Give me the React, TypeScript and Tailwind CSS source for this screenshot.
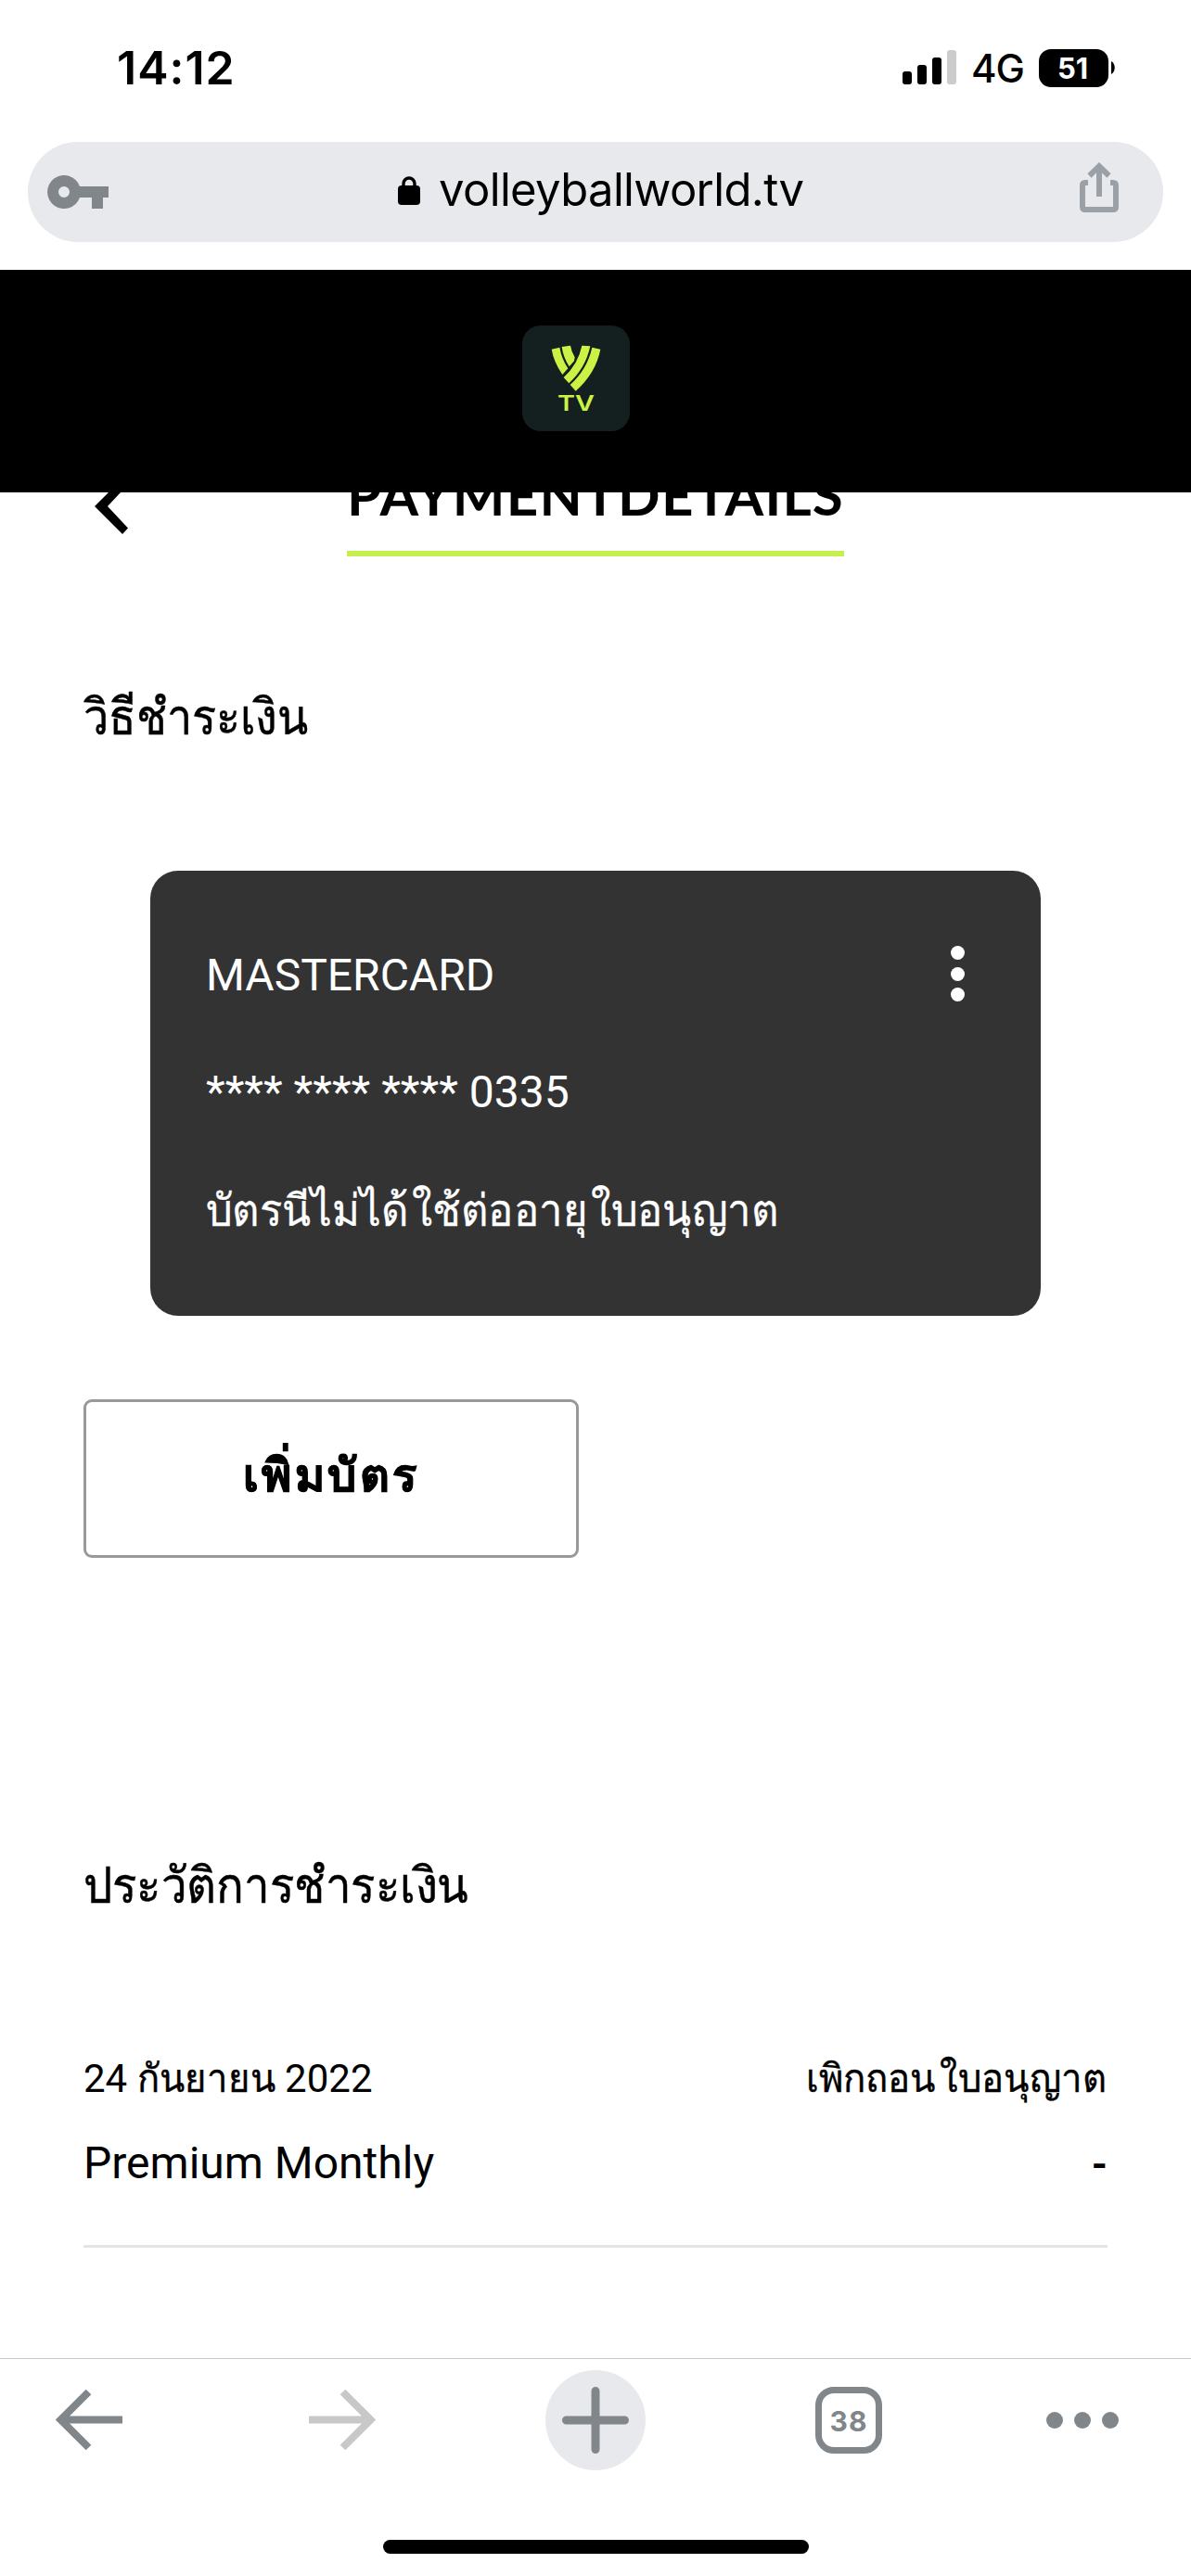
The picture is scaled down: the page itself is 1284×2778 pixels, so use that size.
import React from "react";

function StatusBar() {
  return (
    <div className="flex h-[153px] items-start justify-between pt-[44px] pl-[126px] pr-[82px]">
      <span className="font-[Inter] text-[50px] leading-[58px] font-semibold tracking-[1px]">14:12</span>
      <div className="flex h-[58px] items-center">
        <div className="mt-[-1px] flex h-[37px] items-end gap-[6px]">
          <i className="h-[14px] w-[10px] rounded-[3px] bg-black" />
          <i className="h-[21px] w-[10px] rounded-[3px] bg-black" />
          <i className="h-[29px] w-[10px] rounded-[3px] bg-black" />
          <i className="h-[37px] w-[10px] rounded-[3px] bg-[#cccccc]" />
        </div>
        <span className="ml-[16px] w-[73px] pt-[2px] font-[Inter] text-[42px] leading-[50px] font-medium tracking-[-1px]">4G</span>
        <div className="flex h-[41px] w-[75px] items-center justify-center rounded-[13px] bg-black pr-[2px] font-[Inter] text-[31px] font-bold leading-none text-white">
          51
        </div>
        <svg className="ml-[3px]" width="4" height="14" viewBox="0 0 4 14">
          <path d="M0 0C5 3 5 11 0 14Z" />
        </svg>
      </div>
    </div>
  );
}

function AddressBar() {
  return (
    <div className="mx-[30px] flex h-[108px] items-center justify-between rounded-full bg-[#e8e9ed] pl-[21px] pr-[48px]">
      <svg width="66" height="36" viewBox="0 0 66 36" fill="#80868a">
        <path
          fillRule="evenodd"
          d="M35 12A18 18 0 1 0 35 24H48V36H60V24H66V12ZM18 12A6 6 0 1 1 18 24A6 6 0 1 1 18 12Z"
        />
      </svg>
      <div className="ml-[13px] flex items-center">
        <svg className="mt-[-3px]" width="24" height="31" viewBox="0 0 24 31">
          <rect y="10" width="24" height="21" rx="4" />
          <path d="M6 12V8a6 6 0 0 1 12 0v4" fill="none" stroke="#000" strokeWidth="3.4" />
        </svg>
        <span className="ml-[20px] mt-[-4px] w-[392px] font-[Inter] text-[49px] leading-[60px] tracking-[-0.650px] whitespace-nowrap">
          volleyballworld.tv
        </span>
      </div>
      <svg className="mt-[-10px]" width="42" height="54" viewBox="0 0 42 54" fill="none" stroke="#9aa0a6" strokeWidth="6">
        <path d="M9 22H6Q3 22 3 25V48Q3 51 6 51H36Q39 51 39 48V25Q39 22 36 22H33" />
        <path d="M21 37V5M10.500 14.500L21 4.200L31.500 14.500" />
      </svg>
    </div>
  );
}

function Brand() {
  return (
    <header className="mt-[30px] flex h-[240px] justify-center bg-black pt-[60px] pr-[42px]">
      <div className="flex h-[114px] w-[116px] flex-col items-center rounded-[20px] bg-[#14201f] pt-[21px]">
        <svg width="54" height="50" viewBox="163 128 160 150" fill="#cdf246">
          <path d="M164 142L190 136Q196 172 217 204L199 224Q171 183 164 142Z" />
          <path d="M197 134L225 130Q228 150 239 168L237 180L221 198Q202 169 197 134Z" />
          <path d="M262 130L289 132Q274 203 220 252L203 233Q250 190 262 130Z" />
          <path d="M295 136L322 142Q307 219 242 277L224 257Q279 207 295 136Z" />
        </svg>
        <span className="mt-[2px] scale-x-[1.25] font-[Inter] text-[23px] leading-[22px] font-semibold text-[#cdf246]">TV</span>
      </div>
    </header>
  );
}

function PageTitle() {
  return (
    <div className="h-[69px] overflow-hidden">
      <div className="mt-[-31px] flex h-[100px] items-start pl-[102px]">
        <svg className="mt-[16px]" width="36" height="60" viewBox="0 0 36 60">
          <path d="M30 0L36 6.500L14 30L36 53.500L30 60L0 30Z" />
        </svg>
        <h1 className="ml-[236px] h-[100px] w-[536px] border-b-[6px] border-[#c6ee4c] text-center font-[Lato] text-[60px] leading-[66px] font-bold tracking-[1.200px] whitespace-nowrap">
          PAYMENTDETAILS
        </h1>
      </div>
    </div>
  );
}

function PaymentCard() {
  return (
    <div className="mx-[72px] mt-[123px] flex h-[480px] justify-between rounded-[30px] bg-[#333333] pt-[81px] pr-[82px] pl-[60px] text-[48px] text-white">
      <div className="mt-[2px] flex flex-col whitespace-nowrap">
        <span className="leading-[60px]">MASTERCARD</span>
        <span className="mt-[66px] leading-[60px]">**** **** **** 0335</span>
        <span className="mt-[68px] origin-left scale-x-[0.945] leading-[60px] [-webkit-text-stroke:0.300px_white]">
          บัตรนีไม่ได้<span className="ml-[4px]">ใช้ต่ออายุ</span>
          <span className="ml-[4px]">ใบอนุญาต</span>
        </span>
      </div>
      <div className="flex flex-col gap-[7.500px]">
        <i className="size-[15px] rounded-full bg-white" />
        <i className="size-[15px] rounded-full bg-white" />
        <i className="size-[15px] rounded-full bg-white" />
      </div>
    </div>
  );
}

function Toolbar() {
  return (
    <nav className="mt-[119px] h-[235px] border-t border-[#c8c8c8]">
      <div className="flex h-[132px] items-center pl-[60px]">
        <svg width="72" height="68" viewBox="0 0 72 68" fill="none" stroke="#80868a" strokeWidth="8">
          <path d="M72 33.500H7M35.500 3.500L5.500 33.500L35.500 63.500" />
        </svg>
        <svg className="ml-[201px]" width="72" height="68" viewBox="0 0 72 68" fill="none" stroke="#c8c8c8" strokeWidth="8">
          <path d="M0 33.500H65M36.500 3.500L66.500 33.500L36.500 63.500" />
        </svg>
        <div className="ml-[183px] flex size-[108px] items-center justify-center rounded-full bg-[#e8e9ed]">
          <svg width="72" height="72" viewBox="0 0 72 72" stroke="#80868a" strokeWidth="9" strokeLinecap="round">
            <path d="M36 4.500V67.500M4.500 36H67.500" />
          </svg>
        </div>
        <div className="ml-[183px] flex size-[72px] items-center justify-center rounded-[20px] border-[7px] border-[#80868a] pt-[2px] font-[Inter] text-[30px] font-bold tracking-[1px] text-[#80868a]">
          38
        </div>
        <div className="ml-[177px] flex gap-[12px]">
          <i className="size-[18px] rounded-full bg-[#80868a]" />
          <i className="size-[18px] rounded-full bg-[#80868a]" />
          <i className="size-[18px] rounded-full bg-[#80868a]" />
        </div>
      </div>
      <div className="mx-auto mt-[63px] h-[15px] w-[459px] rounded-full bg-black" />
    </nav>
  );
}

export default function App() {
  return (
    <div className="h-[2778px] w-[1284px] overflow-hidden bg-white font-[Roboto,sans-serif] text-black">
      <StatusBar />
      <AddressBar />
      <Brand />
      <PageTitle />
      <main className="px-[90px]">
        <h2 className="mt-[131px] origin-left scale-x-[0.9] text-[54px] leading-[85px] whitespace-nowrap [-webkit-text-stroke:0.500px_black]">
          วิธีชำระเงิน
        </h2>
        <PaymentCard />
        <button className="mt-[90px] flex h-[171px] w-[534px] items-center justify-center rounded-[9px] border-[3px] border-[#999999] pb-[6px] text-[49px] leading-[70px] font-bold tracking-[3.500px] whitespace-nowrap [-webkit-text-stroke:0.900px_black]">
          เพิ่มบัตร
        </button>
        <h2 className="mt-[311px] origin-left scale-x-[0.912] text-[54px] leading-[85px] whitespace-nowrap [-webkit-text-stroke:0.500px_black]">
          ประวัติการชำระเงิน
        </h2>
        <div className="mt-[131px] border-b-[3px] border-[#e5e5e5] whitespace-nowrap">
          <div className="flex h-[70px] items-center justify-between text-[42px] leading-[70px]">
            <span>
              24{" "}
              <span className="mr-[-8px] inline-block origin-left scale-x-[0.95] [-webkit-text-stroke:0.400px_black]">กันยายน</span>{" "}
              2022
            </span>
            <span className="mr-[1px] origin-right scale-x-[0.955] [-webkit-text-stroke:0.400px_black]">
              เพิกถอน<span className="ml-[4px]">ใบอนุญาต</span>
            </span>
          </div>
          <div className="mt-[21px] flex h-[123px] items-start justify-between text-[48px] leading-[70px]">
            <span>Premium Monthly</span>
            <span className="mt-[-2px] mr-px font-['Open_Sans'] font-semibold">-</span>
          </div>
        </div>
      </main>
      <Toolbar />
    </div>
  );
}
